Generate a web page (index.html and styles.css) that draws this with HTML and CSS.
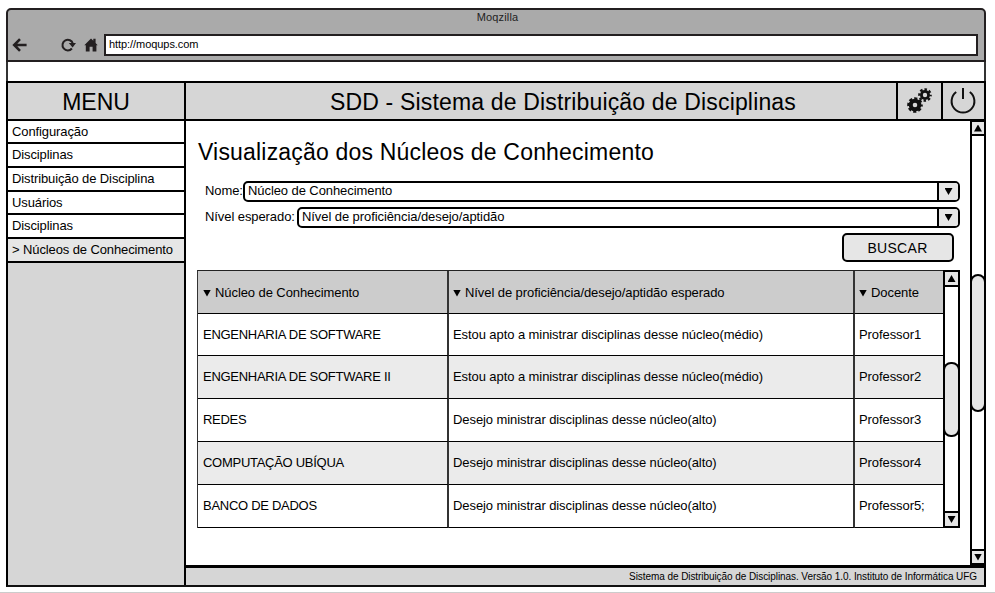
FILE: index.html
```html
<!DOCTYPE html>
<html lang="pt-BR">
<head>
<meta charset="utf-8">
<title>SDD</title>
<link rel="stylesheet" href="styles.css">
</head>
<body>
<div class="window">
  <header class="chrome">
    <div class="chrome-title">Moqzilla</div>
    <div class="toolbar">
      <svg class="ic-back" width="16" height="14" viewBox="0 0 16 14"><path d="M8 1.2L2.2 7L8 12.8M2.5 7H14.6" fill="none" stroke="#231f20" stroke-width="2.6"/></svg>
      <svg class="ic-reload" width="15" height="14" viewBox="0 0 15 14"><path d="M10.9 10.5A5.3 5.3 0 1 1 11.9 5.7" fill="none" stroke="#231f20" stroke-width="2"/><path d="M7.8 5.1H15L11.6 9.5Z" fill="#231f20"/></svg>
      <svg class="ic-home" width="14" height="14" viewBox="0 0 14 14"><path d="M0.3 7.2L7 0.6L9.3 2.8V0.8H11.6V5L13.7 7.2H12.4V13.4H8.6V8.8H5.6V13.4H1.8V7.2Z" fill="#231f20"/></svg>
      <div class="url">http://moqups.com</div>
    </div>
  </header>
  <div class="strip"></div>
  <div class="app">
    <aside class="side">
      <div class="menu-title"><span>MENU</span></div>
      <nav>
        <a>Configuração</a>
        <a>Disciplinas</a>
        <a>Distribuição de Disciplina</a>
        <a>Usuários</a>
        <a>Disciplinas</a>
        <a class="active">&gt; Núcleos de Conhecimento</a>
      </nav>
    </aside>
    <section class="main">
      <div class="head">
        <h1><span>SDD - Sistema de Distribuição de Disciplinas</span></h1>
        <div class="cell gear">
          <svg width="26" height="26" viewBox="0 0 26 26" fill="none" stroke="#111">
            <circle cx="8" cy="17" r="4.3" stroke-width="4"/>
            <circle cx="8" cy="17" r="6.5" stroke-width="2.6" stroke-dasharray="3.1 2.005" stroke-dashoffset="1.55"/>
            <circle cx="18" cy="7" r="3.6" stroke-width="2.8"/>
            <circle cx="18" cy="7" r="5.7" stroke-width="2.2" stroke-dasharray="2.5 1.977" stroke-dashoffset="1.25"/>
          </svg>
        </div>
        <div class="cell power">
          <svg width="28" height="28" viewBox="0 0 28 28" fill="none" stroke="#111" stroke-width="2"><path d="M7.2 5A11.4 11.4 0 1 0 20.8 5M14 1V12"/></svg>
        </div>
      </div>
      <div class="body">
        <div class="content">
          <h2><span>Visualização dos Núcleos de Conhecimento</span></h2>
          <div class="field"><label class="l1">Nome:</label><div class="select"><span>Núcleo de Conhecimento</span><i><b class="down"></b></i></div></div>
          <div class="field"><label class="l2">Nível esperado:</label><div class="select"><span>Nível de proficiência/desejo/aptidão</span><i><b class="down"></b></i></div></div>
          <button><span>BUSCAR</span></button>
          <div class="table">
            <div class="grid">
              <div class="th"><b class="down"></b><span>Núcleo de Conhecimento</span></div><div class="th"><b class="down"></b><span>Nível de proficiência/desejo/aptidão esperado</span></div><div class="th"><b class="down"></b><span>Docente</span></div>
              <div class="up">ENGENHARIA DE SOFTWARE</div><div>Estou apto a ministrar disciplinas desse núcleo(médio)</div><div>Professor1</div>
              <div class="up alt low">ENGENHARIA DE SOFTWARE II</div><div class="alt low">Estou apto a ministrar disciplinas desse núcleo(médio)</div><div class="alt low">Professor2</div>
              <div class="up low">REDES</div><div class="low">Desejo ministrar disciplinas desse núcleo(alto)</div><div class="low">Professor3</div>
              <div class="up alt low">COMPUTAÇÃO UBÍQUA</div><div class="alt low">Desejo ministrar disciplinas desse núcleo(alto)</div><div class="alt low">Professor4</div>
              <div class="up low">BANCO DE DADOS</div><div class="low">Desejo ministrar disciplinas desse núcleo(alto)</div><div class="low">Professor5;</div>
            </div>
            <div class="scroll inner"><i><b class="upward"></b></i><div class="track"><div class="thumb"></div></div><i><b class="down"></b></i></div>
          </div>
        </div>
        <div class="scroll outer"><i><b class="upward"></b></i><div class="track"><div class="thumb"></div></div><i><b class="down"></b></i></div>
      </div>
      <footer><span>Sistema de Distribuição de Disciplinas. Versão 1.0. Instituto de Informática UFG</span></footer>
    </section>
  </div>
</div>
<div class="rule"></div>
</body>
</html>
```

FILE: styles.css
```css
* { box-sizing: border-box; }
body { margin: 0; height: 593px; overflow: hidden; background: #fff; color: #000; font: 13px "Liberation Sans", Arial, sans-serif; display: flex; flex-direction: column; }
h1, h2 { margin: 0; font-weight: normal; }
svg { display: block; flex: none; }
span, label { white-space: nowrap; }
.window { margin: 8px 0 0 6px; width: 980px; height: 579px; display: flex; flex-direction: column; }
.chrome { height: 54px; background: #aaa; border: 2px solid #231f20; border-radius: 5px 5px 0 0; }
.chrome-title { height: 14px; line-height: 15px; text-align: center; font-size: 11px; letter-spacing: .15px; padding-left: 3px; color: #222; }
.toolbar { display: flex; align-items: center; margin-top: 10px; height: 22px; }
.ic-back { margin-left: 4px; }
.ic-reload { margin-left: 33px; }
.ic-home { margin-left: 8px; }
.url { margin-left: 6px; width: 874px; height: 22px; background: #fff; border: 2px solid #231f20; line-height: 17px; font-size: 11px; padding-left: 3px; letter-spacing: -.06px; }
.strip { height: 19px; border: solid #333; border-width: 0 2px; }
.app { height: 506px; display: flex; border: 2px solid #000; border-bottom: 2px solid #111; background: #d6d6d6; }
.side { width: 178px; border-right: 2px solid #000; flex: none; }
.menu-title { height: 38px; border-bottom: 2px solid #000; text-align: center; font-size: 23px; line-height: 38px; }
nav { display: flex; flex-direction: column; }
nav a { height: 23.8px; border-bottom: 2px solid #000; background: #fff; padding-left: 4px; line-height: 22px; white-space: nowrap; letter-spacing: -.11px; }
nav a:first-child { height: 23px; }
nav a.active { background: #e6e6e6; }
.main { flex: 1; display: flex; flex-direction: column; }
.head { height: 38px; display: flex; border-bottom: 2px solid #000; flex: none; }
.head h1 { flex: 1; text-align: center; font-size: 23px; line-height: 38px; letter-spacing: .16px; padding-left: 44px; }
.cell { border-left: 2px solid #000; display: flex; align-items: center; justify-content: center; }
.gear { width: 45px; }
.power { width: 43px; }
.power svg { margin-left: -1px; }
.body { flex: 1; display: flex; background: #fff; border-bottom: 3px solid #000; }
.content { width: 784px; padding: 17px 10px 0 11px; display: flex; flex-direction: column; }
h2 { font-size: 23px; height: 43px; line-height: 28px; letter-spacing: .19px; padding-left: 1px; }
.field { display: flex; height: 21px; margin: 0 0 5px 8px; letter-spacing: -.08px; }
.field label { line-height: 20px; flex: none; }
.l1 { width: 38px; }
.l2 { width: 92px; }
.select { flex: 1; display: flex; border: 2px solid #000; border-radius: 5px; overflow: hidden; line-height: 16px; padding-left: 3px; }
.select span { flex: 1; }
.select i { width: 21px; border-left: 2px solid #000; background: #e6e6e6; display: flex; align-items: center; justify-content: center; }
b { display: block; width: 8px; height: 7px; background: #000; flex: none; }
b.down { clip-path: polygon(0 0, 100% 0, 50% 100%); }
b.upward { clip-path: polygon(0 100%, 100% 100%, 50% 0); }
button { align-self: flex-end; margin: 0 6px 8px 0; width: 112px; height: 29px; border: 2px solid #000; border-radius: 5px; background: #e6e6e6; font: 14px "Liberation Sans", Arial, sans-serif; letter-spacing: .3px; padding: 0 1px 0 0; color: #000; }
.table { display: flex; width: 763px; height: 258px; }
.grid { width: 746px; display: grid; grid-template-columns: 251px 406px 89px; grid-template-rows: 43px 42px 43px 43px 43px 43px; border-top: 1px solid #222; border-left: 1px solid #333; letter-spacing: -.08px; }
.grid > div { border-bottom: 1px solid #000; border-right: 2px solid #333; padding-left: 5px; display: flex; align-items: center; white-space: nowrap; }
.grid > div:nth-child(3n+2), .grid > div:nth-child(3n) { padding-left: 4px; }
.grid > div:nth-child(3n) { border-right: 0; }
.grid > .low { padding-bottom: 2px; }
.grid .up { letter-spacing: -.28px; }
.grid .alt { background: #ebebeb; }
.grid .th { background: #ccc; }
.th b { width: 8px; margin-top: 2px; }
.th span { margin-left: 4px; }
.scroll { display: flex; flex-direction: column; border: 2px solid #000; background: #fff; }
.scroll i { height: 13px; background: #e6e6e6; display: flex; align-items: center; justify-content: center; flex: none; }
.track { flex: 1; border: solid #000; border-width: 2px 0; }
.thumb { margin: 0 -2px; border: 2px solid #000; border-radius: 8px; background: #e6e6e6; }
.inner { width: 17px; }
.inner .thumb { margin-top: 75px; height: 75px; }
.outer { width: 16px; margin-right: -2px; margin-top: -1px; }
.outer i { height: 12px; }
.outer .thumb { margin-top: 138px; height: 138px; }
footer { height: 17px; text-align: right; font-size: 10px; line-height: 17px; padding-right: 7px; flex: none; letter-spacing: -.07px; }
.rule { margin-top: 5px; height: 1px; background: #ccc; flex: none; }
```
